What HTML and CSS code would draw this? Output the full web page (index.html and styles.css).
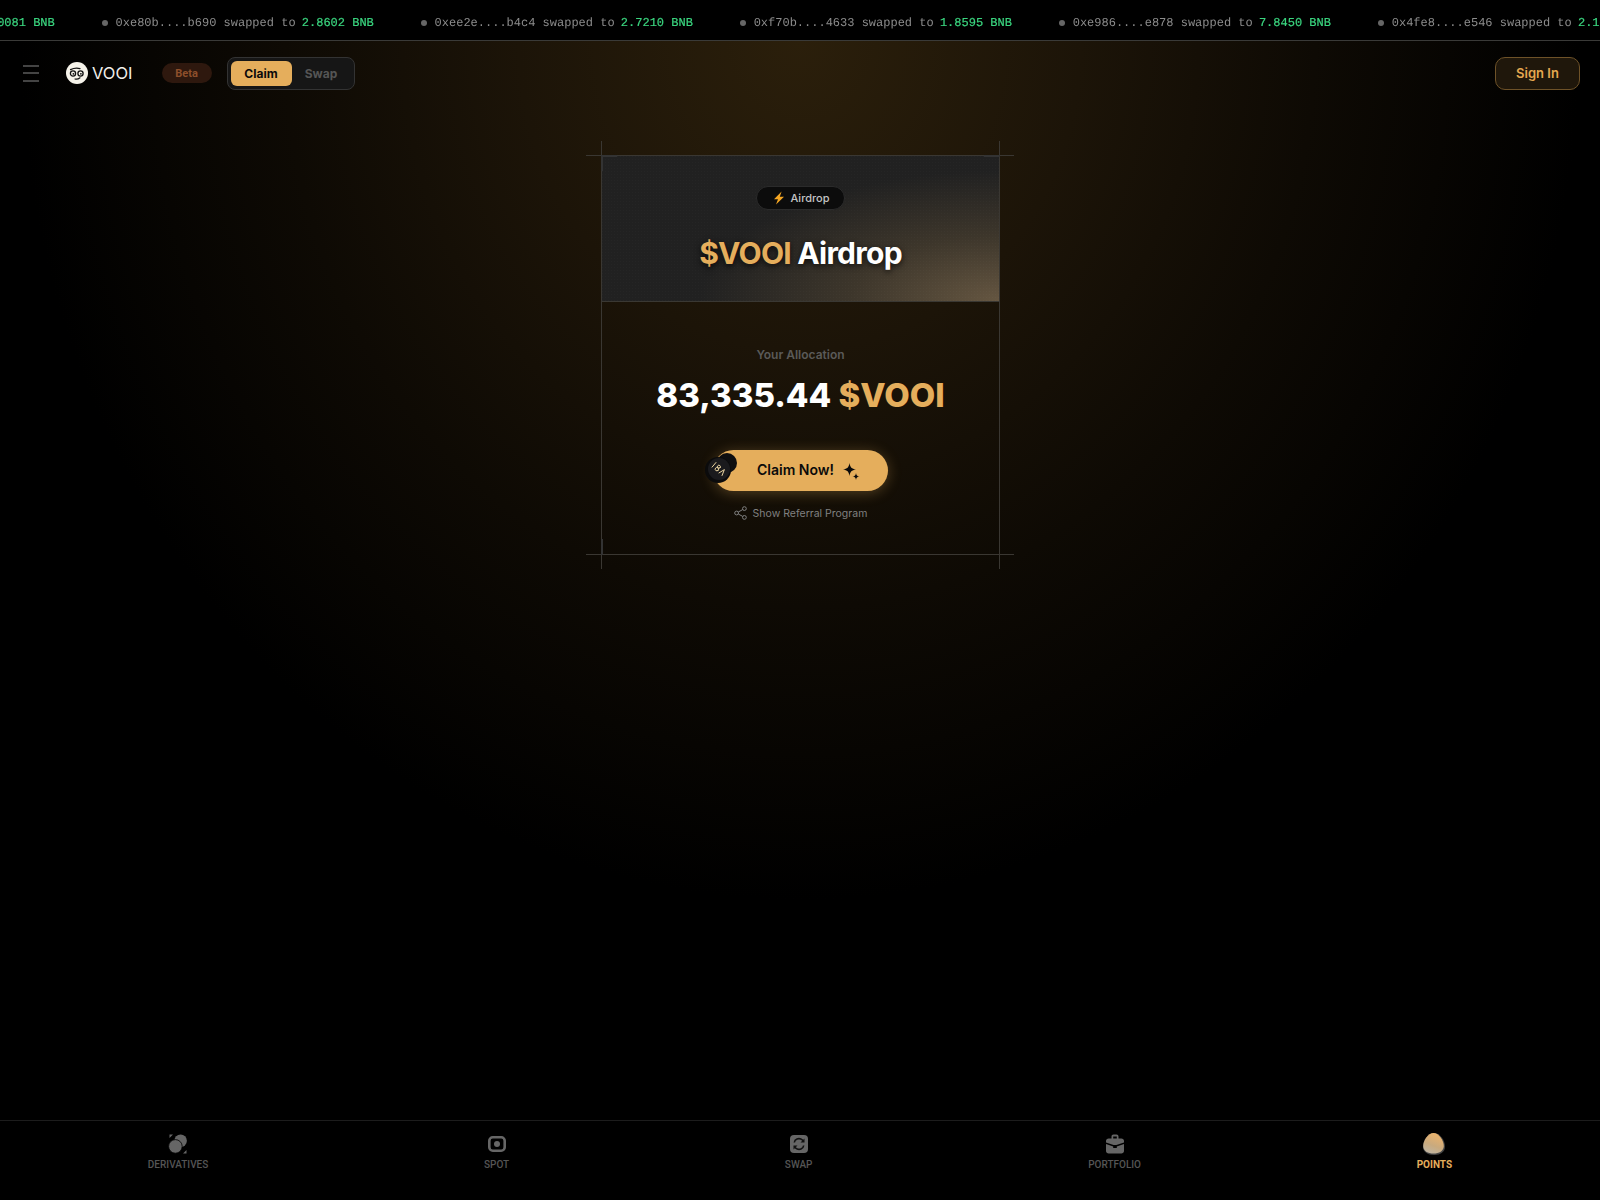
FILE: index.html

```html
<!DOCTYPE html>
<html lang="en">
<head>
  <meta charset="UTF-8">
  <title>VOOI Airdrop</title>
  <link rel="stylesheet" href="styles.css">
</head>
<body>
  <div class="ticker">
    <div class="track">
      <div class="tick"><i></i><span>0x71ac....d2e0 swapped to <b>3.0081 BNB</b></span></div>
      <div class="tick"><i></i><span>0xe80b....b690 swapped to <b>2.8602 BNB</b></span></div>
      <div class="tick"><i></i><span>0xee2e....b4c4 swapped to <b>2.7210 BNB</b></span></div>
      <div class="tick"><i></i><span>0xf70b....4633 swapped to <b>1.8595 BNB</b></span></div>
      <div class="tick"><i></i><span>0xe986....e878 swapped to <b>7.8450 BNB</b></span></div>
      <div class="tick"><i></i><span>0x4fe8....e546 swapped to <b>2.1340 BNB</b></span></div>
    </div>
  </div>

  <header class="topbar">
    <div class="burger"><i></i><i></i><i></i></div>
    <div class="logo">
      <svg width="22" height="22" viewBox="0 0 22 22">
        <circle cx="11" cy="11" r="11" fill="#f6f3ea"/>
        <circle cx="7" cy="11.5" r="2.6" fill="none" stroke="#111" stroke-width="1.3"/>
        <circle cx="14.5" cy="11.5" r="2.6" fill="none" stroke="#111" stroke-width="1.3"/>
        <circle cx="7.4" cy="11.8" r="0.9" fill="#111"/>
        <circle cx="14.9" cy="11.8" r="0.9" fill="#111"/>
        <path d="M4.5 7.6 C7.5 6.2 11 5.8 14 6.6 M9 17 C10.5 17.4 12.5 17 14 15.8" fill="none" stroke="#111" stroke-width="1.2" stroke-linecap="round"/>
      </svg>
      <span>VOOI</span>
    </div>
    <span class="beta">Beta</span>
    <div class="tabs">
      <span class="tab active">Claim</span>
      <span class="tab">Swap</span>
    </div>
    <button class="signin">Sign In</button>
  </header>

  <main class="main">
    <section class="card">
      <i class="line h top"></i>
      <i class="line h bottom"></i>
      <i class="line v left"></i>
      <i class="line v right"></i>
      <i class="corner tl"></i>
      <i class="corner tr"></i>
      <i class="corner bl"></i>
      <div class="hero">
        <div class="badge">
          <svg width="12" height="14" viewBox="0 0 12 14"><path d="M8.6 0.5 L1 8.2 H5 L3 13.5 L11 5.8 H6.8 Z" fill="#f5a623"/></svg>
          <span>Airdrop</span>
        </div>
        <h1><em>$VOOI</em> Airdrop</h1>
      </div>
      <div class="body">
        <div class="alloc-label">Your Allocation</div>
        <div class="amount">83,335.44 <em>$VOOI</em></div>
        <button class="claim">
          <svg class="coin" width="32" height="30" viewBox="0 0 32 30">
            <circle cx="22" cy="10" r="10" fill="#0e0e10"/>
            <circle cx="13" cy="17" r="13" fill="#0b0b0c"/>
            <circle cx="14" cy="16" r="11" fill="#1a1a1d"/>
            <g transform="rotate(40 14 16)" fill="none" stroke="#f0d9a4" stroke-width="0.9" stroke-linecap="round">
              <path d="M7.5 13 V19"/>
              <circle cx="12.5" cy="14.3" r="1.5"/>
              <circle cx="12.5" cy="17.5" r="1.7"/>
              <path d="M16.5 19 L18.5 13 L20.5 19"/>
            </g>
          </svg>
          <span>Claim Now!</span>
          <svg class="sparkle" width="17" height="18" viewBox="0 0 17 18"><path d="M6.5 0 C7.2 4.4 8.6 5.8 13 6.5 C8.6 7.2 7.2 8.6 6.5 13 C5.8 8.6 4.4 7.2 0 6.5 C4.4 5.8 5.8 4.4 6.5 0 Z M13 10 C13.3 12.4 14.1 13.2 16.5 13.5 C14.1 13.8 13.3 14.6 13 17 C12.7 14.6 11.9 13.8 9.5 13.5 C11.9 13.2 12.7 12.4 13 10 Z" fill="#0a0a0a"/></svg>
        </button>
        <div class="referral">
          <svg width="13" height="14" viewBox="0 0 13 14" fill="none" stroke="#808080" stroke-width="1"><circle cx="10.4" cy="2.6" r="1.9"/><circle cx="2.6" cy="7" r="1.9"/><circle cx="10.4" cy="11.4" r="1.9"/><path d="M4.3 6 L8.7 3.6 M4.3 8 L8.7 10.4"/></svg>
          <span>Show Referral Program</span>
        </div>
      </div>
    </section>
  </main>

  <nav class="bottomnav">
    <div class="navitem">
      <svg width="20" height="20" viewBox="0 0 20 20" fill="#666">
        <circle cx="12.6" cy="6.8" r="6.3"/>
        <circle cx="7.4" cy="12.4" r="6.8" stroke="#000" stroke-width="0.8"/>
        <path d="M1.5 0.5 H5 L1.5 4 Z M18.5 19.5 H15 L18.5 16 Z"/>
      </svg>
      <span>Derivatives</span>
    </div>
    <div class="navitem">
      <svg width="20" height="20" viewBox="0 0 20 20"><rect x="2.3" y="3.3" width="15.4" height="13.4" rx="3.5" fill="none" stroke="#666" stroke-width="2.6"/><circle cx="10" cy="10" r="3" fill="#666"/></svg>
      <span>Spot</span>
    </div>
    <div class="navitem">
      <svg width="20" height="20" viewBox="0 0 20 20"><rect x="1" y="1" width="18" height="18" rx="4" fill="#666"/><path d="M14.5 7.5 C13.5 5 10.5 4 8 5 C6.5 5.6 5.5 7 5.3 8.5 M5.5 12.5 C6.5 15 9.5 16 12 15 C13.5 14.4 14.5 13 14.7 11.5" fill="none" stroke="#111" stroke-width="1.6"/><path d="M15.5 4.5 V8.5 H11.5 Z M4.5 15.5 V11.5 H8.5 Z" fill="#111"/></svg>
      <span>Swap</span>
    </div>
    <div class="navitem">
      <svg width="20" height="20" viewBox="0 0 20 20"><path d="M6.5 5 V2.5 C6.5 1.2 7.3 0.5 8.5 0.5 H11.5 C12.7 0.5 13.5 1.2 13.5 2.5 V5 H11.8 V2.5 H8.2 V5 Z" fill="#666"/><path d="M1 7 C1 5.4 2.2 4.5 3.6 4.5 H16.4 C17.8 4.5 19 5.4 19 7 V8.5 L11.4 11 H8.6 L1 8.5 Z" fill="#666"/><path d="M1 10 L8.2 12.4 V14 H11.8 V12.4 L19 10 V17 C19 18.6 17.8 19.5 16.4 19.5 H3.6 C2.2 19.5 1 18.6 1 17 Z" fill="#666"/></svg>
      <span>Portfolio</span>
    </div>
    <div class="navitem active">
      <svg class="egg" width="22" height="22" viewBox="0 0 22 22">
        <defs>
          <linearGradient id="egg" x1="0.7" y1="0" x2="0.3" y2="1">
            <stop offset="0" stop-color="#eeb36a"/>
            <stop offset="0.6" stop-color="#c9aa7e"/>
            <stop offset="1" stop-color="#bfb5a2"/>
          </linearGradient>
        </defs>
        <path d="M11 0 C17 0 22 7.5 22 13.5 C22 19 17.5 22 11 22 C4.5 22 0 19 0 13.5 C0 7.5 5 0 11 0 Z" fill="#444"/>
        <path d="M10.5 0 C16 0 20.8 7.5 20.8 13 C20.8 18 16 20.6 10.5 20.6 C4.8 20.6 0.2 18 0.2 13 C0.2 7.5 5 0 10.5 0 Z" fill="url(#egg)"/>
      </svg>
      <span>Points</span>
    </div>
  </nav>
</body>
</html>
```

FILE: styles.css

```css
* { box-sizing: border-box; }
html, body { height: 100%; }
body {
  margin: 0;
  min-height: 1200px;
  display: flex;
  flex-direction: column;
  overflow: hidden;
  color: #fff;
  font-family: Inter, "Liberation Sans", sans-serif;
  background: #000 radial-gradient(ellipse 780px 860px at 50% 40px, #2b1f0b 0%, #1c1408 36%, #0e0a04 66%, #000 100%) no-repeat;
}
em { font-style: normal; color: #e5ae5c; }
button { font-family: inherit; cursor: pointer; }

/* ticker */
.ticker { height: 41px; flex: none; overflow: hidden; background: #000; border-bottom: 1px solid #3a3a38; }
.track { display: flex; gap: 47.3px; margin-left: -217px; height: 40px; padding-top: 5px; align-items: center; white-space: nowrap; will-change: transform; }
.tick { display: flex; align-items: center; gap: 7.5px; flex: none; font: 12px "Liberation Mono", monospace; color: #8c8c8c; text-rendering: geometricPrecision; }
.tick i { width: 6px; height: 6px; border-radius: 50%; background: #666; }
.tick b { font-weight: 400; margin-left: -1px; color: #3ad57f; -webkit-text-stroke: 0.2px #3ad57f; }

/* header */
.topbar { height: 64px; flex: none; display: flex; align-items: center; padding: 0 20px 0 23px; }
.burger { width: 16px; display: flex; flex-direction: column; gap: 5.5px; margin-right: 27px; }
.burger i { height: 2px; background: #444; }
.logo { display: flex; align-items: center; gap: 4px; margin-right: 29px; }
.logo span { font-size: 16.5px; font-weight: 400; color: #f2f0ea; }
.beta { width: 50px; height: 20px; border-radius: 10px; background: #2e180e; color: #8d4f2b; font-family: Roboto, sans-serif; font-size: 11px; font-weight: 700; display: flex; align-items: center; justify-content: center; margin-right: 15px; }
.tabs { display: flex; width: 128px; height: 33px; padding: 3px; background: #161616; border: 1px solid #333; border-radius: 8px; }
.tab { width: 59px; display: flex; align-items: center; justify-content: center; border-radius: 6px; font-size: 12px; font-weight: 700; color: #555; }
.tab.active { width: 61px; background: #e5ae5c; color: #0a0a0a; }
.signin { margin-left: auto; width: 85px; height: 33px; border-radius: 10px; border: 1px solid #6e5228; background: #1f170b; color: #e5a850; font-size: 13px; font-weight: 600; }

/* card */
.main { flex: 1; display: flex; justify-content: center; align-items: flex-start; padding-top: 50px; }
.card { position: relative; width: 399px; height: 400px; margin-left: 1px; display: flex; flex-direction: column; }
.line { position: absolute; background: #3a3732; }
.line.h { height: 1px; left: -15px; right: -14px; }
.line.v { width: 1px; top: -14px; bottom: -14px; }
.line.top { top: 0; }
.line.bottom { bottom: 0; }
.line.left { left: 0; }
.line.right { right: 0; }
.corner { position: absolute; width: 16px; height: 16px; border: 0 solid #333; }
.corner.tl { left: 0; top: 0; border-width: 2px 0 0 2px; }
.corner.tr { right: 0; top: 0; border-top-width: 2px; }
.corner.bl { left: 0; bottom: 0; border-left-width: 2px; }
.hero {
  height: 147px;
  display: flex;
  flex-direction: column;
  align-items: center;
  padding-top: 31px;
  border-bottom: 1px solid #3a3833;
  background:
    radial-gradient(rgba(255,255,255,0.02) 1px, transparent 1px) 0 0 / 3px 3px,
    radial-gradient(ellipse 300px 130px at 100% 100%, #655641 0%, #3d362b 50%, rgba(34,34,34,0) 100%),
    #212121;
}
.badge { display: flex; align-items: center; gap: 6px; height: 24px; padding: 0 15px 0 16px; border-radius: 12px; background: #0c0c0c; border: 1px solid #2b2b2b; font-size: 11px; font-weight: 500; color: #c4c4c4; }
.hero h1 { margin: 24px 0 0; font-size: 30px; line-height: 38px; font-weight: 700; letter-spacing: -0.75px; text-shadow: 0 2px 6px rgba(0,0,0,0.8); }

.body { flex: 1; display: flex; flex-direction: column; align-items: center; padding-top: 45px; }
.alloc-label { font-size: 12px; line-height: 16px; font-weight: 600; color: #5a5a58; }
.amount { margin-top: 10px; font-size: 33px; line-height: 44px; font-weight: 800; }
.claim {
  position: relative;
  margin-top: 33px;
  width: 175px;
  height: 41px;
  padding: 0 0 2px 16px;
  display: flex;
  align-items: center;
  justify-content: center;
  gap: 9px;
  border: 0;
  border-radius: 21px;
  background: #e5ae5c;
  color: #0a0a0a;
  font-size: 14px;
  font-weight: 600;
  box-shadow: 0 2px 14px rgba(229,174,92,0.3);
}
.coin { position: absolute; left: -8px; top: 3px; }
.sparkle { margin-top: 4px; }
.referral { margin-top: 15px; display: flex; align-items: center; gap: 6px; font-size: 10.5px; color: #808080; }

/* bottom nav */
.bottomnav { height: 80px; flex: none; display: flex; justify-content: space-around; padding: 13px 10px 0; background: #000; border-top: 1px solid #1c1c1c; }
.navitem { display: flex; flex-direction: column; align-items: center; gap: 5px; font-family: Roboto, sans-serif; font-size: 10px; line-height: 12px; font-weight: 500; color: #555; text-transform: uppercase; }
.navitem.active { color: #e5ae5c; font-weight: 700; }
.egg { margin: -1px 0; }
```
